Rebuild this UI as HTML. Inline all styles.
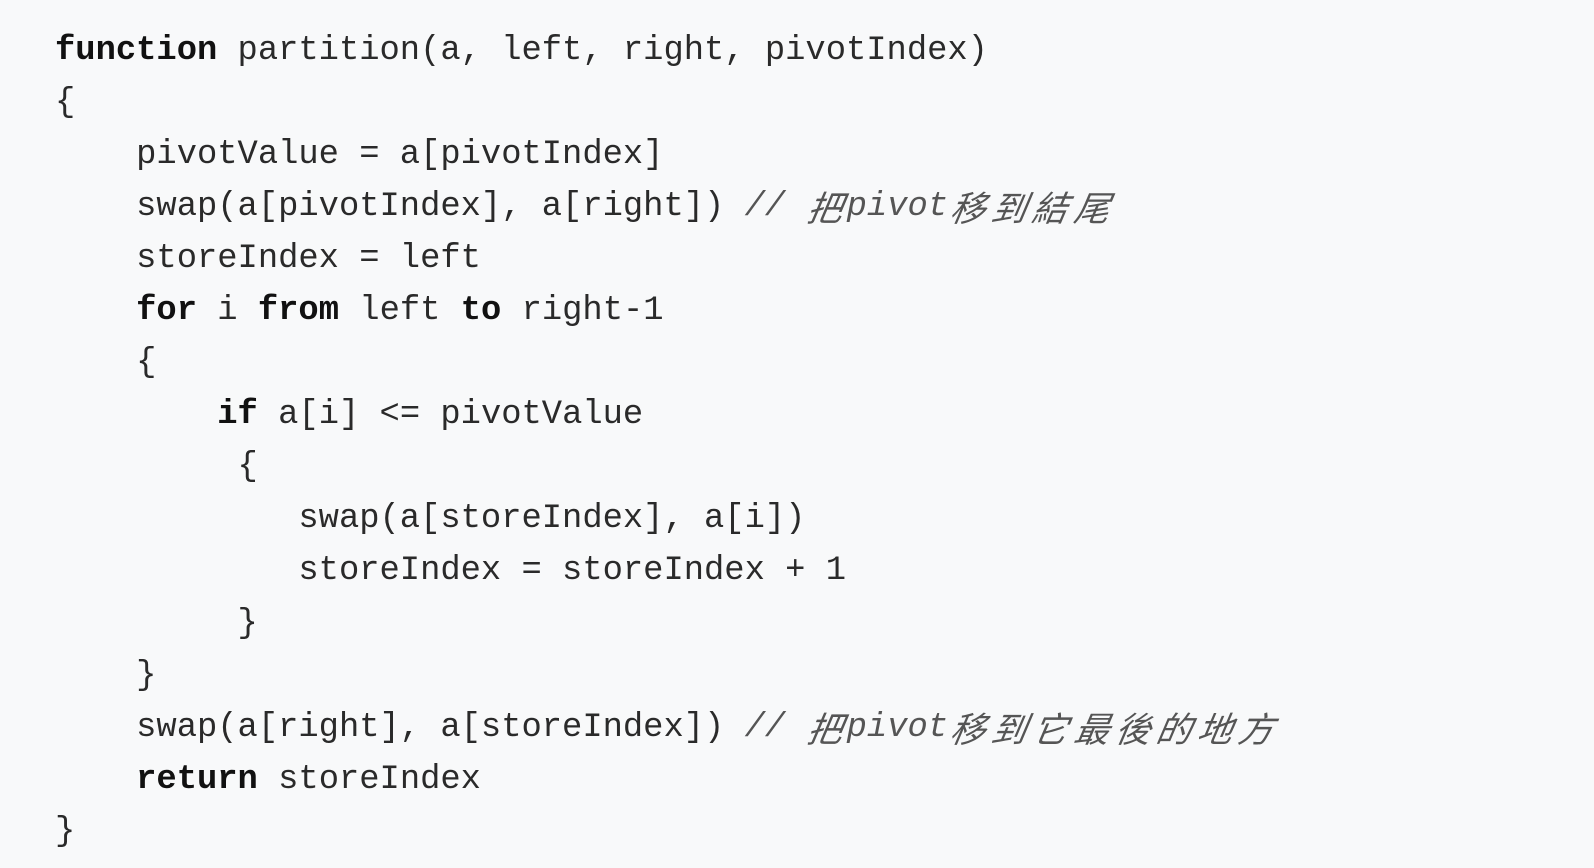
<!DOCTYPE html>
<html><head><meta charset="utf-8"><style>
html,body{margin:0;padding:0;background:#f8f9fa;width:1594px;height:868px;overflow:hidden}
pre{margin:0;position:absolute;left:55px;top:25px;font-family:"Liberation Mono","Noto Serif CJK SC",monospace;font-size:33.8px;line-height:52.05px;color:#2a2a2a;white-space:pre}
b{font-weight:bold;color:#111}
i{color:#555;font-style:italic}
.c{display:inline-block;width:41.2px;height:40px;line-height:40px;vertical-align:-6px;text-align:center;font-family:"Noto Sans CJK SC",sans-serif;font-size:35px;font-style:italic;transform:skewX(-10deg)}
</style></head><body><pre><b>function</b> partition(a, left, right, pivotIndex)
{
    pivotValue = a[pivotIndex]
    swap(a[pivotIndex], a[right]) <i>// <span class="c">把</span>pivot<span class="c">移</span><span class="c">到</span><span class="c">結</span><span class="c">尾</span></i>
    storeIndex = left
    <b>for</b> i <b>from</b> left <b>to</b> right-1
    {
        <b>if</b> a[i] &lt;= pivotValue
         {
            swap(a[storeIndex], a[i])
            storeIndex = storeIndex + 1
         }
    }
    swap(a[right], a[storeIndex]) <i>// <span class="c">把</span>pivot<span class="c">移</span><span class="c">到</span><span class="c">它</span><span class="c">最</span><span class="c">後</span><span class="c">的</span><span class="c">地</span><span class="c">方</span></i>
    <b>return</b> storeIndex
}</pre></body></html>
